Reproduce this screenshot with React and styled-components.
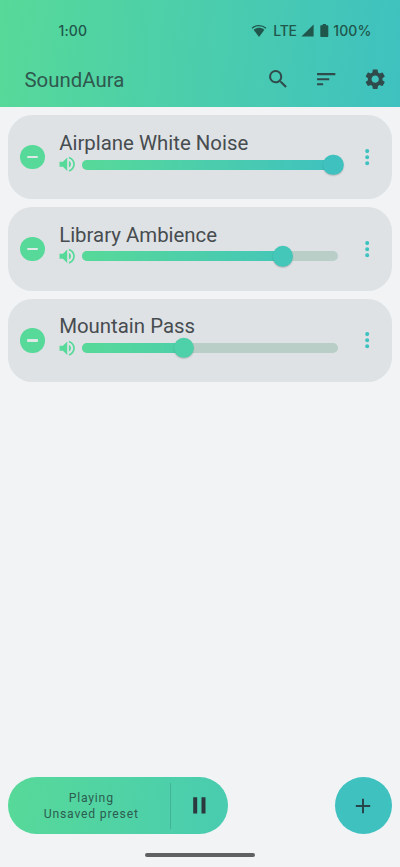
import React from "react";
import styled, { createGlobalStyle } from "styled-components";

const GREEN = "#57d999";
const TEAL = "#3fc1c0";

const mix = (t) => {
  const a = [87, 217, 153];
  const b = [63, 193, 192];
  return `rgb(${a.map((v, i) => Math.round(v + (b[i] - v) * t)).join(",")})`;
};

const GlobalStyle = createGlobalStyle`
  * { box-sizing: border-box; }
  body { margin: 0; background: #f1f3f5; font-family: Roboto, sans-serif; }
  button { border: 0; padding: 0; background: none; font: inherit; color: inherit; }
  svg { display: block; }
`;

const Screen = styled.div`
  display: flex;
  flex-direction: column;
  width: 100%;
  height: 867px;
  overflow: hidden;
`;

const Header = styled.header`
  height: 107.4px;
  flex: none;
  background: linear-gradient(95deg, ${GREEN}, ${TEAL});
`;

const StatusBar = styled.div`
  display: flex;
  align-items: center;
  height: 52px;
  padding: 9px 28.5px 0 58.5px;
  color: #20564b;
  font: 500 14px/18px Inter, sans-serif;
`;

const Clock = styled.span`
  flex: 1;
  letter-spacing: 0.1px;
`;

const Network = styled.span`
  margin: 0 4px 0 6px;
  letter-spacing: -0.25px;
`;

const Battery = styled.span`
  margin-left: 4px;
  letter-spacing: 0.1px;
`;

const AppBar = styled.div`
  display: flex;
  align-items: center;
  height: 54px;
  padding-left: 24.5px;
  color: #304b4b;
`;

const AppTitle = styled.h1`
  flex: 1;
  margin: 0;
  padding-top: 2px;
  font-size: 20.4px;
  font-weight: 400;
  line-height: 24px;
  color: #2f584e;
`;

const BarButton = styled.button`
  display: grid;
  place-items: center;
  width: 48.9px;
  height: 48.9px;
`;

const TrackList = styled.main`
  flex: 1;
  display: flex;
  flex-direction: column;
  gap: 8.1px;
  padding: 8.1px 8.1px 0;
`;

const Card = styled.article`
  display: flex;
  align-items: center;
  height: 83.5px;
  padding-left: 12.2px;
  border-radius: 24.4px;
  background: #dee2e5;
`;

const ToggleButton = styled.button`
  display: grid;
  place-items: center;
  width: 24.5px;
  height: 24.5px;
  border-radius: 50%;
  background: ${GREEN};
  &::before {
    content: "";
    width: 10.4px;
    height: 2.4px;
    border-radius: 1px;
    background: #dee8e5;
  }
`;

const TrackBody = styled.div`
  flex: 1;
  height: 100%;
  padding: 14.5px 0 0 14.4px;
`;

const TrackName = styled.h2`
  margin: 0;
  font-size: 20.4px;
  font-weight: 400;
  line-height: 26px;
  color: #474c50;
`;

const VolumeRow = styled.div`
  display: flex;
  align-items: center;
  height: 20.4px;
  margin: -1.5px 0 0 -2.6px;
  color: ${GREEN};
`;

const Slider = styled.div`
  position: relative;
  width: 256px;
  height: 10.2px;
  margin-left: 5.3px;
  border-radius: 6px;
  background: #b8cec6;
`;

const SliderFill = styled.div`
  height: 100%;
  border-radius: 6px 0 0 6px;
  background: linear-gradient(90deg, ${GREEN}, ${TEAL}) 0 0 / 256px 100% no-repeat;
`;

const Thumb = styled.div`
  position: absolute;
  top: 50%;
  width: 20.4px;
  height: 20.4px;
  transform: translate(-50%, -50%);
  border-radius: 50%;
  box-shadow: 0 1px 1.5px rgba(0, 0, 0, 0.2);
`;

const MoreButton = styled.button`
  display: grid;
  place-items: center;
  width: 49px;
  height: 49px;
  color: ${TEAL};
`;

const BottomBar = styled.footer`
  display: flex;
  flex: none;
  align-items: center;
  justify-content: space-between;
  height: 57.2px;
  padding: 0 8.1px;
`;

const Player = styled.div`
  display: flex;
  align-items: center;
  width: 220.4px;
  height: 57px;
  border-radius: 29px;
  background: linear-gradient(95deg, ${GREEN}, #49ccb0);
`;

const PlayerText = styled.div`
  width: 162.3px;
  padding-left: 4px;
  text-align: center;
  font-size: 12.2px;
  line-height: 16.3px;
  letter-spacing: 0.8px;
  color: #2c5d50;
`;

const Divider = styled.div`
  width: 1px;
  height: 46px;
  background: #43b397;
`;

const PauseButton = styled.button`
  display: grid;
  place-items: center;
  flex: 1;
  height: 57px;
  color: #2b383d;
`;

const AddButton = styled.button`
  display: grid;
  place-items: center;
  width: 57px;
  height: 57px;
  border-radius: 50%;
  background: ${TEAL};
  color: #27464b;
`;

const NavArea = styled.div`
  display: flex;
  flex: none;
  justify-content: center;
  height: 32.5px;
  padding-top: 18px;
`;

const NavHandle = styled.div`
  width: 110px;
  height: 4.2px;
  border-radius: 3px;
  background: #5f6061;
`;

const Icon = ({ d, size = 24.4 }) => (
  <svg width={size} height={size} viewBox="0 0 24 24" fill="currentColor" aria-hidden="true">
    <path d={d} />
  </svg>
);

const SEARCH =
  "M15.5 14h-.79l-.28-.27A6.471 6.471 0 0 0 16 9.5 6.5 6.5 0 1 0 9.5 16c1.61 0 3.09-.59 4.23-1.57l.27.28v.79l5 4.99L20.49 19l-4.99-5zm-6 0C7.01 14 5 11.99 5 9.5S7.01 5 9.5 5 14 7.01 14 9.5 11.99 14 9.5 14z";
const SORT = "M3 18h6v-2H3v2zM3 6v2h18V6H3zm0 7h12v-2H3v2z";
const GEAR =
  "M19.14 12.94c.04-.3.06-.61.06-.94 0-.32-.02-.64-.07-.94l2.03-1.58c.18-.14.23-.41.12-.61l-1.92-3.32c-.12-.22-.37-.29-.59-.22l-2.39.96c-.5-.38-1.03-.7-1.62-.94l-.36-2.54c-.04-.24-.24-.41-.48-.41h-3.84c-.24 0-.43.17-.47.41l-.36 2.54c-.59.24-1.13.57-1.62.94l-2.39-.96c-.22-.08-.47 0-.59.22L2.74 8.87c-.12.21-.08.47.12.61l2.03 1.58c-.05.3-.09.63-.09.94s.02.64.07.94l-2.03 1.58c-.18.14-.23.41-.12.61l1.92 3.32c.12.22.37.29.59.22l2.39-.96c.5.38 1.03.7 1.62.94l.36 2.54c.05.24.24.41.48.41h3.84c.24 0 .44-.17.47-.41l.36-2.54c.59-.24 1.13-.56 1.62-.94l2.39.96c.22.08.47 0 .59-.22l1.92-3.32c.12-.22.07-.47-.12-.61l-2.01-1.58zM12 15.6c-1.98 0-3.6-1.62-3.6-3.6s1.62-3.6 3.6-3.6 3.6 1.62 3.6 3.6-1.62 3.6-3.6 3.6z";
const VOLUME =
  "M3 9v6h4l5 5V4L7 9H3zm13.5 3c0-1.77-1.02-3.29-2.5-4.03v8.05c1.48-.73 2.5-2.25 2.5-4.02zM14 3.23v2.06c2.89.86 5 3.54 5 6.71s-2.11 5.85-5 6.71v2.06c4.01-.91 7-4.49 7-8.77s-2.99-7.86-7-8.77z";
const MORE =
  "M12 8a2 2 0 1 0 0-4 2 2 0 0 0 0 4zm0 2a2 2 0 1 0 0 4 2 2 0 0 0 0-4zm0 6a2 2 0 1 0 0 4 2 2 0 0 0 0-4z";

const WifiIcon = () => (
  <svg width="16" height="14" viewBox="0 0 16 14" aria-hidden="true">
    <path d="M1 4.2C5 .8 11 .8 15 4.2" fill="none" stroke="currentColor" strokeWidth="1.3" />
    <path d="M2.6 5.8C5.8 3.2 10.2 3.2 13.4 5.8L8 13Z" fill="currentColor" />
  </svg>
);

const SignalIcon = () => (
  <svg width="13" height="13" viewBox="0 0 13 13" fill="currentColor" aria-hidden="true">
    <path d="M12.6 .4V12.6H.4Z" />
  </svg>
);

const BatteryIcon = styled.svg`
  margin-left: 6.5px;
`;

const tracks = [
  { name: "Airplane White Noise", fill: 251 },
  { name: "Library Ambience", fill: 200.3 },
  { name: "Mountain Pass", fill: 101.3 },
];

const Track = ({ name, fill }) => (
  <Card>
    <ToggleButton aria-label="Remove" />
    <TrackBody>
      <TrackName>{name}</TrackName>
      <VolumeRow>
        <Icon d={VOLUME} size={20.4} />
        <Slider>
          <SliderFill style={{ width: fill }} />
          <Thumb style={{ left: fill, background: mix(fill / 256) }} />
        </Slider>
      </VolumeRow>
    </TrackBody>
    <MoreButton aria-label="More options">
      <Icon d={MORE} />
    </MoreButton>
  </Card>
);

export default function App() {
  return (
    <Screen>
      <GlobalStyle />
      <Header>
        <StatusBar>
          <Clock>1:00</Clock>
          <WifiIcon />
          <Network>LTE</Network>
          <SignalIcon />
          <BatteryIcon width="9" height="13" viewBox="0 0 9 13" fill="currentColor">
            <path d="M2.7 0h3.2v1.3h1.6q.8 0 .8.8v10.1q0 .8-.8.8h-6.4q-.8 0-.8-.8v-10.1q0-.8.8-.8h1.6z" />
          </BatteryIcon>
          <Battery>100%</Battery>
        </StatusBar>
        <AppBar>
          <AppTitle>SoundAura</AppTitle>
          <BarButton aria-label="Search"><Icon d={SEARCH} /></BarButton>
          <BarButton aria-label="Sort"><Icon d={SORT} /></BarButton>
          <BarButton aria-label="Settings"><Icon d={GEAR} /></BarButton>
        </AppBar>
      </Header>
      <TrackList>
        {tracks.map((t) => <Track key={t.name} {...t} />)}
      </TrackList>
      <BottomBar>
        <Player>
          <PlayerText>
            <div>Playing</div>
            <div>Unsaved preset</div>
          </PlayerText>
          <Divider />
          <PauseButton aria-label="Pause">
            <svg width="13" height="17" viewBox="0 0 13 17" fill="currentColor">
              <path d="M.2.3h4v16.3h-4zM8.5.3h4v16.3h-4z" />
            </svg>
          </PauseButton>
        </Player>
        <AddButton aria-label="Add">
          <svg width="16" height="16" viewBox="0 0 16 16" fill="none" stroke="currentColor" strokeWidth="2">
            <path d="M8 .8v14.4M.8 8h14.4" />
          </svg>
        </AddButton>
      </BottomBar>
      <NavArea><NavHandle /></NavArea>
    </Screen>
  );
}
